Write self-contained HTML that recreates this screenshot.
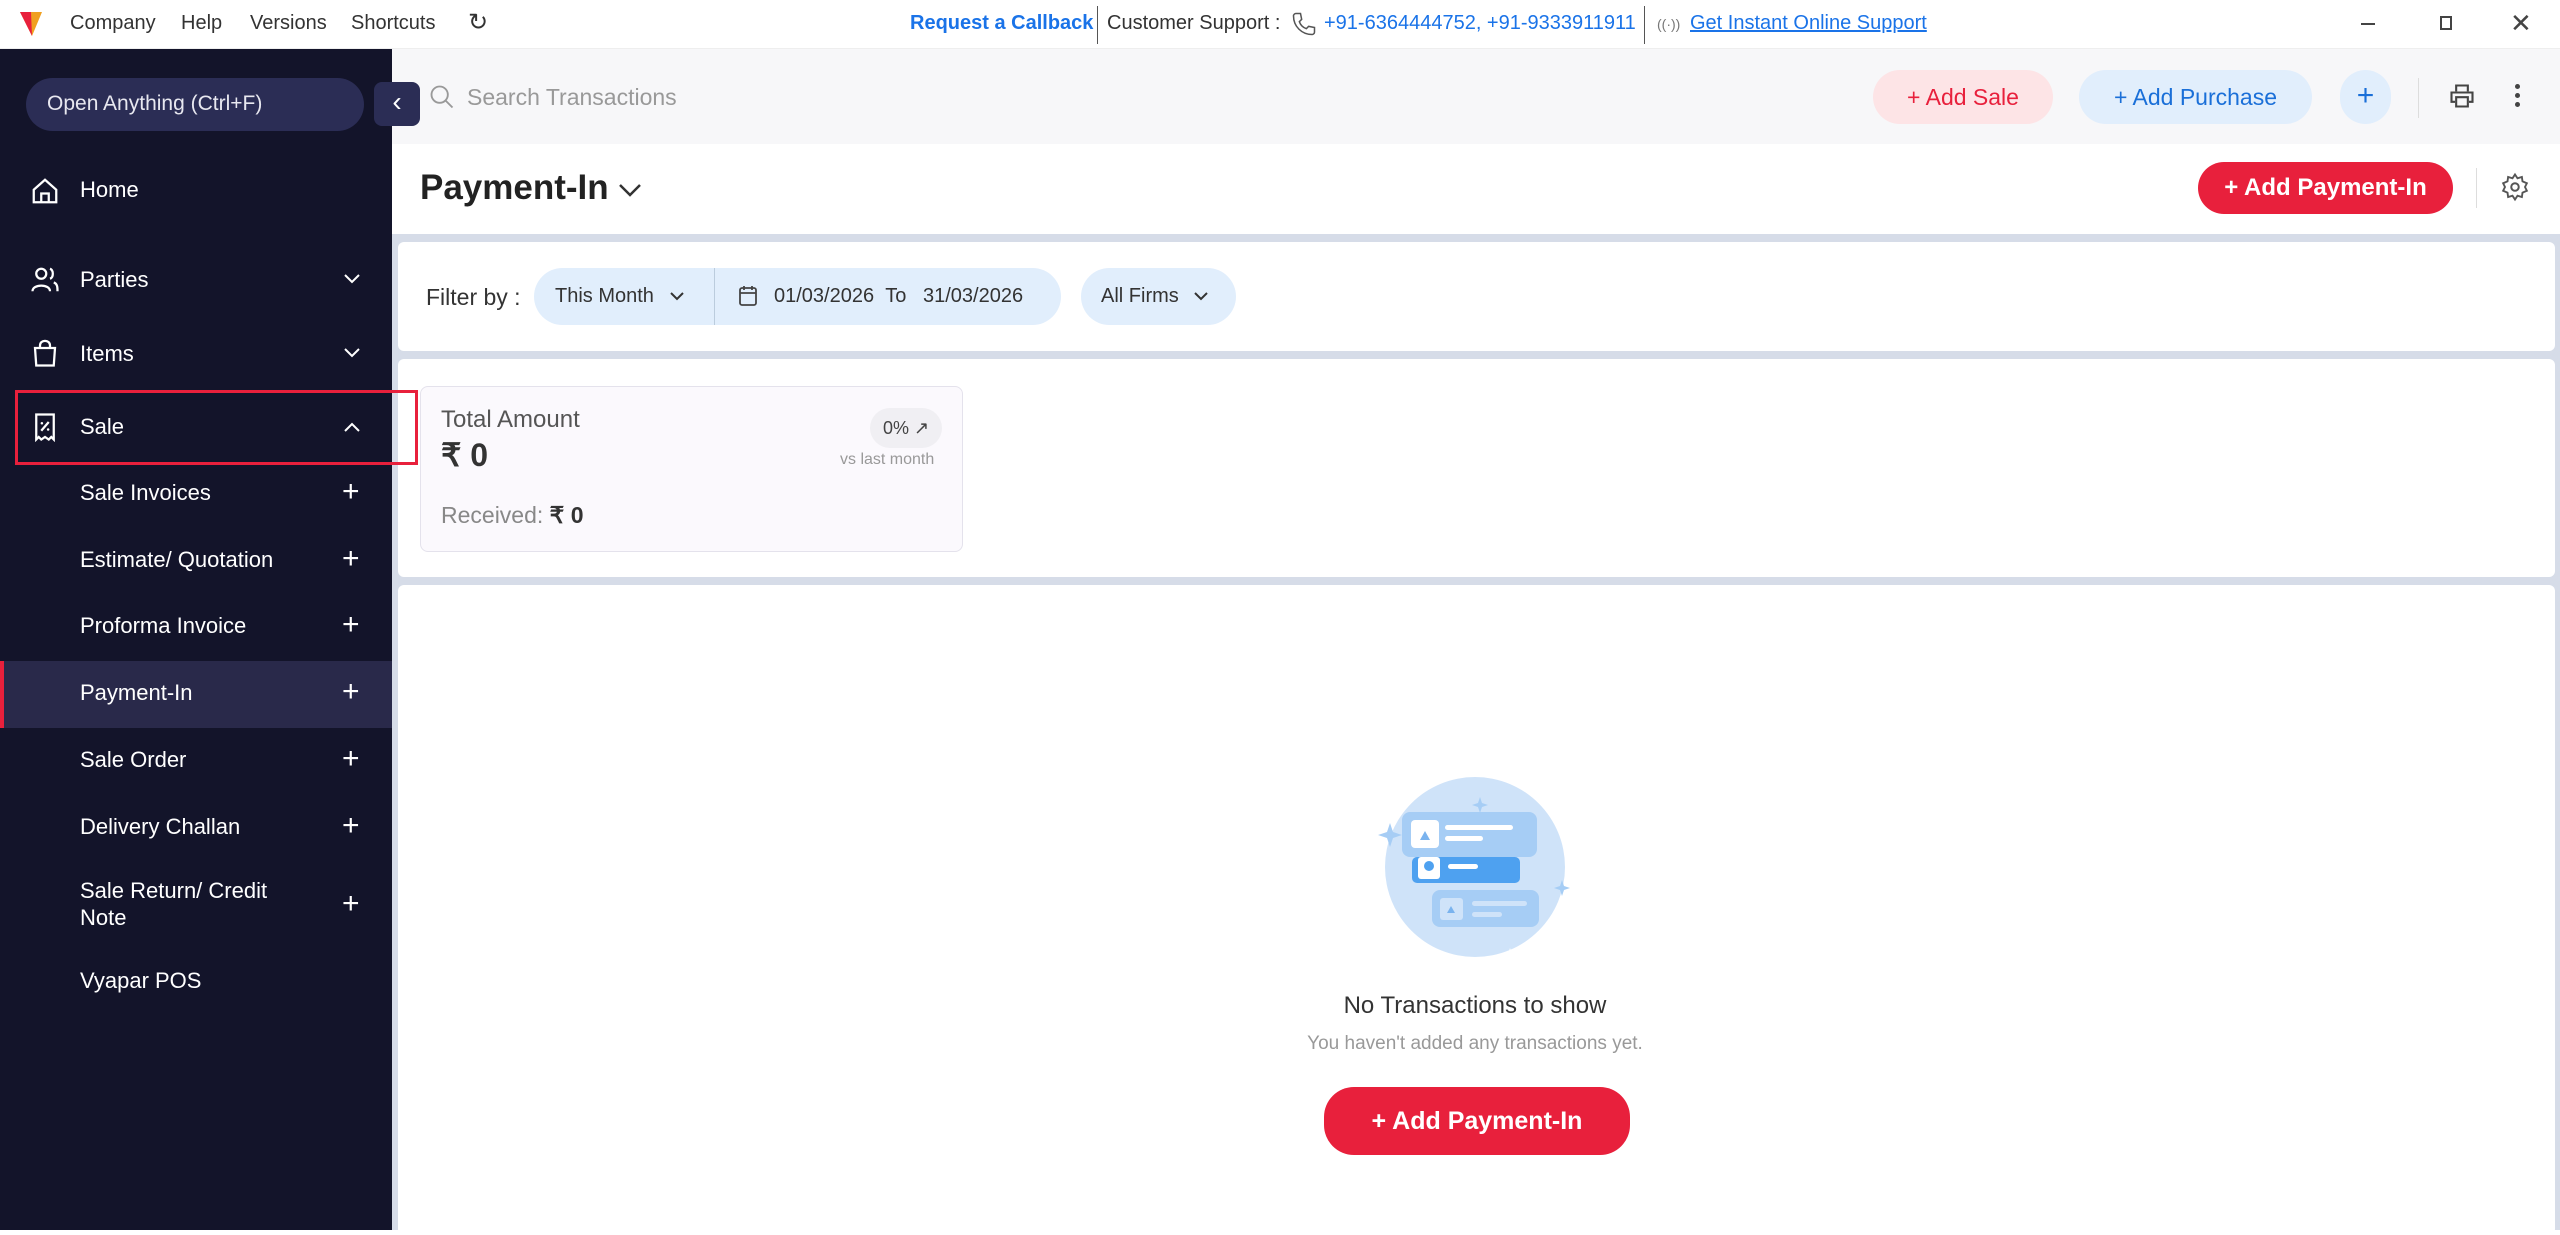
<!DOCTYPE html>
<html><head><meta charset="utf-8"><style>
*{box-sizing:border-box;margin:0;padding:0}
body{width:2560px;height:1230px;overflow:hidden;font-family:"Liberation Sans",sans-serif;background:#fff;position:relative}
.a{position:absolute;white-space:nowrap}
.top{left:0;top:0;width:2560px;height:49px;background:#fff;border-bottom:1px solid #eee}
.tb{font-size:20px;color:#333;top:12px}
.side{left:0;top:49px;width:392px;height:1181px;background:#13142a}
.si{color:#fff;font-size:22px;left:80px}
.ic{left:30px}
.chev{left:342px}
.plus{left:342px;color:#fff;font-size:30px;line-height:30px}
.pill{border-radius:30px}
</style></head><body>
<div class="a top"></div>
<svg class="a" style="left:18px;top:10px" width="26" height="28" viewBox="0 0 26 28"><path d="M2 2 L24 2 L14 26 Z" fill="#f0a020"/><path d="M2 2 L13 2 L14 26 Z" fill="#e8203c"/></svg>
<div class="a tb" style="left:70px">Company</div>
<div class="a tb" style="left:181px">Help</div>
<div class="a tb" style="left:250px">Versions</div>
<div class="a tb" style="left:351px">Shortcuts</div>
<div class="a tb" style="left:468px;font-size:24px;top:8px">↻</div>
<div class="a tb" style="left:910px;color:#1a73e8;font-weight:bold">Request a Callback</div>
<div class="a" style="left:1097px;top:6px;width:1px;height:38px;background:#555"></div>
<div class="a tb" style="left:1107px">Customer Support :</div>
<svg class="a" style="left:1290px;top:10px" width="28" height="28" viewBox="0 0 24 24"><path d="M5 3 L9 3 L10 8 L8 10 C9 13 11 15 14 16 L16 14 L21 15 L21 19 C21 20 20 21 19 21 C10 21 3 14 3 5 C3 4 4 3 5 3Z" fill="none" stroke="#555" stroke-width="1.3"/></svg>
<div class="a tb" style="left:1324px;color:#1a73e8">+91-6364444752, +91-9333911911</div>
<div class="a" style="left:1644px;top:6px;width:1px;height:38px;background:#555"></div>
<div class="a tb" style="left:1657px;font-size:14px;top:16px;color:#777">((·))</div>
<div class="a tb" style="left:1690px;color:#1a73e8;text-decoration:underline">Get Instant Online Support</div>
<div class="a" style="left:2361px;top:23px;width:14px;height:2px;background:#444"></div>
<div class="a" style="left:2440px;top:16px;width:12px;height:14px;border:2px solid #444"></div>
<div class="a tb" style="left:2510px;top:8px;font-size:26px;color:#444">✕</div>

<div class="a side"></div>
<div class="a pill" style="left:26px;top:78px;width:338px;height:53px;background:#2b2d55"></div>
<div class="a" style="left:47px;top:92px;color:#e8e8f0;font-size:21px">Open Anything (Ctrl+F)</div>
<svg class="a ic" style="top:176px" width="30" height="30" viewBox="0 0 24 24"><path d="M3 11 L12 3 L21 11 V21 H3 Z M9 21 V14 H15 V21" fill="none" stroke="#fff" stroke-width="1.8"/></svg>
<div class="a si" style="top:177px">Home</div>
<svg class="a ic" style="top:265px" width="30" height="30" viewBox="0 0 24 24"><circle cx="9" cy="7" r="4" fill="none" stroke="#fff" stroke-width="1.8"/><path d="M2 21 C2 15 16 15 16 21 M16 3 C19 4 19 10 16 11 M19 14 C22 15 22 18 22 21" fill="none" stroke="#fff" stroke-width="1.8"/></svg>
<div class="a si" style="top:267px">Parties</div>
<svg class="a chev" style="top:272px" width="20" height="14" viewBox="0 0 20 14"><path d="M3 3 L10 10 L17 3" fill="none" stroke="#fff" stroke-width="2"/></svg>
<svg class="a ic" style="top:338px" width="30" height="30" viewBox="0 0 24 24"><path d="M4 8 H20 L19 22 H5 Z M8 8 V6 C8 1 16 1 16 6 V8" fill="none" stroke="#fff" stroke-width="1.8"/></svg>
<div class="a si" style="top:341px">Items</div>
<svg class="a chev" style="top:346px" width="20" height="14" viewBox="0 0 20 14"><path d="M3 3 L10 10 L17 3" fill="none" stroke="#fff" stroke-width="2"/></svg>
<svg class="a ic" style="top:412px" width="30" height="30" viewBox="0 0 24 24"><path d="M5 2 H19 V22 L17 20 L15 22 L12 20 L9 22 L7 20 L5 22 Z M9 15 L15 8" fill="none" stroke="#fff" stroke-width="1.8"/><circle cx="9.5" cy="9" r="1" fill="#fff"/><circle cx="14.5" cy="14" r="1" fill="#fff"/></svg>
<div class="a si" style="top:414px">Sale</div>
<svg class="a chev" style="top:420px" width="20" height="14" viewBox="0 0 20 14"><path d="M3 11 L10 4 L17 11" fill="none" stroke="#fff" stroke-width="2"/></svg>
<div class="a si" style="top:480px">Sale Invoices</div><div class="a plus" style="top:477px">+</div>
<div class="a si" style="top:547px">Estimate/ Quotation</div><div class="a plus" style="top:544px">+</div>
<div class="a si" style="top:613px">Proforma Invoice</div><div class="a plus" style="top:610px">+</div>
<div class="a" style="left:0;top:661px;width:392px;height:67px;background:#29294a"></div>
<div class="a" style="left:0;top:661px;width:4px;height:67px;background:#e8203c"></div>
<div class="a si" style="top:680px">Payment-In</div><div class="a plus" style="top:677px">+</div>
<div class="a si" style="top:747px">Sale Order</div><div class="a plus" style="top:744px">+</div>
<div class="a si" style="top:814px">Delivery Challan</div><div class="a plus" style="top:811px">+</div>
<div class="a si" style="top:878px">Sale Return/ Credit</div>
<div class="a si" style="top:905px">Note</div><div class="a plus" style="top:889px">+</div>
<div class="a si" style="top:968px">Vyapar POS</div>

<div class="a" style="left:392px;top:49px;width:2168px;height:95px;background:#f7f7f9"></div>
<div class="a" style="left:374px;top:82px;width:46px;height:44px;background:#2b2d55;border-radius:8px;color:#fff;font-size:28px;text-align:center;line-height:40px;z-index:5">‹</div>
<svg class="a" style="left:428px;top:83px" width="28" height="28" viewBox="0 0 24 24"><circle cx="10" cy="10" r="7" fill="none" stroke="#999" stroke-width="1.6"/><path d="M15 15 L21 21" stroke="#999" stroke-width="1.6"/></svg>
<div class="a" style="left:467px;top:84px;font-size:23px;color:#999">Search Transactions</div>
<div class="a pill" style="left:1873px;top:70px;width:180px;height:54px;background:#fde4e6;color:#e8203c;font-size:23px;text-align:center;line-height:54px">+ Add Sale</div>
<div class="a pill" style="left:2079px;top:70px;width:233px;height:54px;background:#e1eefc;color:#1a6fd8;font-size:23px;text-align:center;line-height:54px">+ Add Purchase</div>
<div class="a pill" style="left:2340px;top:70px;width:51px;height:54px;background:#e1eefc;color:#1a6fd8;font-size:30px;text-align:center;line-height:52px">+</div>
<div class="a" style="left:2418px;top:78px;width:1px;height:40px;background:#ddd"></div>
<svg class="a" style="left:2448px;top:82px" width="28" height="28" viewBox="0 0 24 24"><path d="M7 8 V3 H17 V8 M6 17 H3 V9 H21 V17 H18 M7 13 H17 V21 H7 Z" fill="none" stroke="#444" stroke-width="1.8"/></svg>
<div class="a" style="left:2515px;top:84px;width:5px;height:5px;border-radius:50%;background:#444;box-shadow:0 9px 0 #444,0 18px 0 #444"></div>

<div class="a" style="left:420px;top:168px;font-size:35px;font-weight:bold;color:#222">Payment-In</div>
<svg class="a" style="left:616px;top:180px" width="28" height="20" viewBox="0 0 28 20"><path d="M4 5 L14 15 L24 5" fill="none" stroke="#333" stroke-width="2.5"/></svg>
<div class="a pill" style="left:2198px;top:162px;width:255px;height:52px;background:#e8203c;color:#fff;font-size:24px;font-weight:bold;text-align:center;line-height:52px">+ Add Payment-In</div>
<div class="a" style="left:2476px;top:168px;width:1px;height:40px;background:#ddd"></div>
<svg class="a" style="left:2500px;top:172px" width="30" height="30" viewBox="0 0 24 24"><circle cx="12" cy="12" r="3" fill="none" stroke="#555" stroke-width="1.6"/><path d="M12 2 L14 5 L17.5 4 L18 7.5 L21.5 9 L20 12 L21.5 15 L18 16.5 L17.5 20 L14 19 L12 22 L10 19 L6.5 20 L6 16.5 L2.5 15 L4 12 L2.5 9 L6 7.5 L6.5 4 L10 5 Z" fill="none" stroke="#555" stroke-width="1.5"/></svg>

<div class="a" style="left:392px;top:234px;width:2168px;height:996px;background:#d6dce8"></div>
<div class="a" style="left:398px;top:242px;width:2157px;height:109px;background:#fff;border-radius:6px"></div>
<div class="a" style="left:398px;top:359px;width:2157px;height:218px;background:#fff;border-radius:6px"></div>
<div class="a" style="left:398px;top:585px;width:2157px;height:650px;background:#fff;border-radius:6px"></div>
<div class="a" style="left:15px;top:390px;width:403px;height:75px;border:3px solid #e8203c;z-index:5"></div>

<div class="a" style="left:426px;top:284px;font-size:23px;color:#333">Filter by :</div>
<div class="a pill" style="left:534px;top:268px;width:527px;height:57px;background:#e1eefc"></div>
<div class="a" style="left:714px;top:268px;width:1px;height:57px;background:#bcd"></div>
<div class="a" style="left:555px;top:285px;font-size:20px;color:#333">This Month</div>
<svg class="a" style="left:668px;top:290px" width="18" height="12" viewBox="0 0 18 12"><path d="M3 3 L9 9 L15 3" fill="none" stroke="#333" stroke-width="2"/></svg>
<svg class="a" style="left:737px;top:284px" width="22" height="24" viewBox="0 0 22 24"><rect x="3" y="4" width="16" height="17" rx="2" fill="none" stroke="#444" stroke-width="1.8"/><path d="M3 9 H19 M7 2 V6 M15 2 V6" stroke="#444" stroke-width="1.8"/></svg>
<div class="a" style="left:774px;top:285px;font-size:20px;color:#333">01/03/2026 &nbsp;To &nbsp;&nbsp;31/03/2026</div>
<div class="a pill" style="left:1081px;top:268px;width:155px;height:57px;background:#e1eefc"></div>
<div class="a" style="left:1101px;top:285px;font-size:20px;color:#333">All Firms</div>
<svg class="a" style="left:1192px;top:290px" width="18" height="12" viewBox="0 0 18 12"><path d="M3 3 L9 9 L15 3" fill="none" stroke="#333" stroke-width="2"/></svg>

<div class="a" style="left:420px;top:386px;width:543px;height:166px;background:#fbf9fd;border:1px solid #e4e2ec;border-radius:8px"></div>
<div class="a" style="left:441px;top:406px;font-size:24px;color:#555">Total Amount</div>
<div class="a" style="left:441px;top:436px;font-size:32px;font-weight:bold;color:#333">₹ 0</div>
<div class="a" style="left:441px;top:502px;font-size:23px;color:#888">Received: <b style="color:#333">₹ 0</b></div>
<div class="a pill" style="left:870px;top:408px;width:72px;height:40px;background:#f0eff3;font-size:18px;color:#444;text-align:center;line-height:40px">0% ↗</div>
<div class="a" style="left:840px;top:451px;font-size:16px;color:#999">vs last month</div>

<svg class="a" style="left:1370px;top:770px" width="210" height="200" viewBox="0 0 210 200">
<circle cx="105" cy="97" r="90" fill="#cfe3f9"/>
<rect x="32" y="42" width="135" height="45" rx="8" fill="#a6cdf5"/>
<rect x="41" y="50" width="28" height="28" rx="4" fill="#fff"/><path d="M50 70 L55 61 L60 70Z" fill="#7ab3ee"/>
<rect x="75" y="55" width="68" height="5" rx="2.5" fill="#fff"/><rect x="75" y="66" width="38" height="5" rx="2.5" fill="#fff"/>
<rect x="42" y="87" width="108" height="26" rx="5" fill="#4ea1f0"/>
<rect x="48" y="87" width="22" height="22" rx="3" fill="#fff"/><circle cx="59" cy="96" r="5" fill="#4ea1f0"/>
<rect x="78" y="94" width="30" height="5" rx="2.5" fill="#fff"/>
<rect x="62" y="120" width="107" height="37" rx="8" fill="#a6cdf5"/>
<rect x="70" y="128" width="23" height="22" rx="3" fill="#cfe3f9"/><path d="M77 143 L81 136 L85 143Z" fill="#7ab3ee"/>
<rect x="102" y="131" width="55" height="5" rx="2.5" fill="#cfe3f9"/><rect x="102" y="142" width="30" height="5" rx="2.5" fill="#cfe3f9"/>
<path d="M110 27 l2 6 6 2 -6 2 -2 6 -2 -6 -6 -2 6 -2z" fill="#a6cdf5"/>
<path d="M20 53 l3 9 9 3 -9 3 -3 9 -3 -9 -9 -3 9 -3z" fill="#a6cdf5"/>
<path d="M192 110 l2 6 6 2 -6 2 -2 6 -2 -6 -6 -2 6 -2z" fill="#a6cdf5"/>
<path d="M30 160 l2 5 5 2 -5 2 -2 5 -2 -5 -5 -2 5 -2z" fill="#fff"/>
<path d="M140 178 l2 6 6 2 -6 2 -2 6 -2 -6 -6 -2 6 -2z" fill="#fff"/>
</svg>
<div class="a" style="left:0;width:2950px;text-align:center;top:992px;font-size:24px;color:#333">No Transactions to show</div>
<div class="a" style="left:0;width:2950px;text-align:center;top:1033px;font-size:19px;color:#999">You haven't added any transactions yet.</div>
<div class="a pill" style="left:1324px;top:1087px;width:306px;height:68px;background:#e8203c;color:#fff;font-size:25px;font-weight:bold;text-align:center;line-height:68px">+ Add Payment-In</div>
</body></html>
